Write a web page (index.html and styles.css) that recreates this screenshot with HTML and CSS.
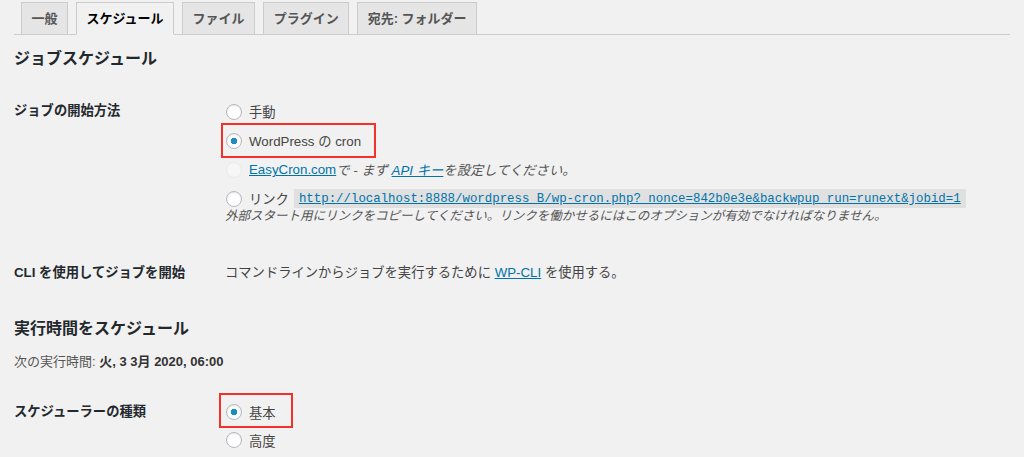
FILE: index.html
```html
<!DOCTYPE html>
<html lang="ja">
<head>
<meta charset="utf-8">
<title>スケジュール</title>
<link rel="stylesheet" href="styles.css">
</head>
<body>
<div class="wrap">
  <nav class="tabs">
    <a class="tab" href="#">一般</a>
    <a class="tab active" href="#">スケジュール</a>
    <a class="tab" href="#">ファイル</a>
    <a class="tab" href="#">プラグイン</a>
    <a class="tab" href="#">宛先: フォルダー</a>
  </nav>

  <h3 class="title title-first">ジョブスケジュール</h3>

  <div class="row row-start">
    <div class="label">ジョブの開始方法</div>
    <div class="value">
      <label class="opt"><input type="radio" name="start">手動</label>
      <label class="opt mark mark-cron"><input type="radio" name="start" checked>WordPress の cron</label>
      <label class="opt"><input type="radio" name="start" disabled><a class="link" href="#">EasyCron.com</a><span class="em">で - まず <a class="link" href="#">API キー</a>を設定してください。</span></label>
      <label class="opt"><input type="radio" name="start">リンク <code class="code"><a class="link" href="#">http://localhost:8888/wordpress_B/wp-cron.php?_nonce=842b0e3e&amp;backwpup_run=runext&amp;jobid=1</a></code></label>
      <p class="desc">外部スタート用にリンクをコピーしてください。リンクを働かせるにはこのオプションが有効でなければなりません。</p>
    </div>
  </div>

  <div class="row row-cli">
    <div class="label">CLI を使用してジョブを開始</div>
    <div class="value value-text">コマンドラインからジョブを実行するために <a class="link" href="#">WP-CLI</a> を使用する。</div>
  </div>

  <h3 class="title title-second">実行時間をスケジュール</h3>
  <p class="next">次の実行時間: <strong>火, 3 3月 2020, 06:00</strong></p>

  <div class="row row-type">
    <div class="label">スケジューラーの種類</div>
    <div class="value">
      <label class="opt opt-tight mark mark-basic"><input type="radio" name="type" checked>基本</label>
      <label class="opt opt-tight"><input type="radio" name="type">高度</label>
    </div>
  </div>
</div>
</body>
</html>
```

FILE: styles.css
```css
html, body {
  margin: 0;
  padding: 0;
}

body {
  background: #f1f1f1;
  color: #444;
  font-family: "Liberation Sans", "Noto Sans CJK JP", sans-serif;
  font-size: 13.3px;
}

.wrap {
  padding: 0 14px;
}

/* tabs */
.tabs {
  display: flex;
  gap: 8px;
  padding: 2px 0 0 7px;
  border-bottom: 1px solid #ccc;
}

.tab {
  display: block;
  height: 31px;
  line-height: 31px;
  padding: 0 9.5px;
  margin-bottom: -1px;
  border: 1px solid #ccc;
  background: #e5e5e5;
  color: #555;
  font-size: 13px;
  font-weight: bold;
  text-decoration: none;
  white-space: nowrap;
}

.tab.active {
  background: #f1f1f1;
  color: #000;
  border-bottom-color: #f1f1f1;
}

/* headings */
.title {
  margin: 0;
  font-size: 16px;
  line-height: 24px;
  font-weight: bold;
  color: #23282d;
}

.title-first {
  margin-top: 12px;
}

.title-second {
  margin-top: 32px;
}

/* rows */
.row {
  display: flex;
}

.label {
  flex: none;
  width: 211px;
  padding-top: 2px;
  line-height: 24px;
  font-weight: bold;
  color: #23282d;
}

.value {
  flex: 1;
  min-width: 0;
}

.row-start {
  padding-top: 26px;
}

.row-cli {
  padding-top: 34px;
}

.value-text {
  padding-top: 2px;
  line-height: 24px;
  color: #444;
}

.row-type {
  padding-top: 27px;
}

/* options */
.opt {
  position: relative;
  display: flex;
  align-items: center;
  height: 29px;
  white-space: nowrap;
  color: #444;
}

.opt-tight {
  height: 28px;
}

.opt input[type="radio"] {
  -webkit-appearance: none;
  appearance: none;
  flex: none;
  box-sizing: border-box;
  width: 16px;
  height: 16px;
  margin: 0 7px 0 1px;
  border: 1px solid #b4b9be;
  border-radius: 50%;
  background: #fff;
  box-shadow: inset 0 1px 2px rgba(0, 0, 0, 0.1);
}

.opt input[type="radio"]:checked {
  background: radial-gradient(circle, #1e8cbe 0 3px, #fff 3.6px);
}

.opt input[type="radio"]:disabled {
  background: #f6f6f6;
  border-color: #ebebeb;
  box-shadow: none;
}

.link {
  color: #0073aa;
  text-decoration: underline;
}

.em {
  font-style: italic;
  color: #555;
}

.code {
  margin-left: 5px;
  padding: 3px 5px 2px;
  background: rgba(0, 0, 0, 0.07);
  font-family: "Liberation Mono", monospace;
  font-size: 12.4px;
}

.desc {
  margin: -6px 0 0;
  font-size: 12.5px;
  line-height: 18px;
  font-style: italic;
  color: #555;
  white-space: nowrap;
}

.next {
  margin: 12px 0 0;
  font-size: 13px;
  line-height: 18px;
  color: #555;
}

.next strong {
  color: #333;
}

/* red annotation boxes */
.mark::after {
  content: "";
  position: absolute;
  box-sizing: border-box;
  border: 2px solid #f4302a;
  pointer-events: none;
}

.mark-cron::after {
  left: -4px;
  top: -3px;
  width: 155px;
  height: 35px;
}

.mark-basic::after {
  left: -6px;
  top: -5px;
  width: 74px;
  height: 35px;
}
```
